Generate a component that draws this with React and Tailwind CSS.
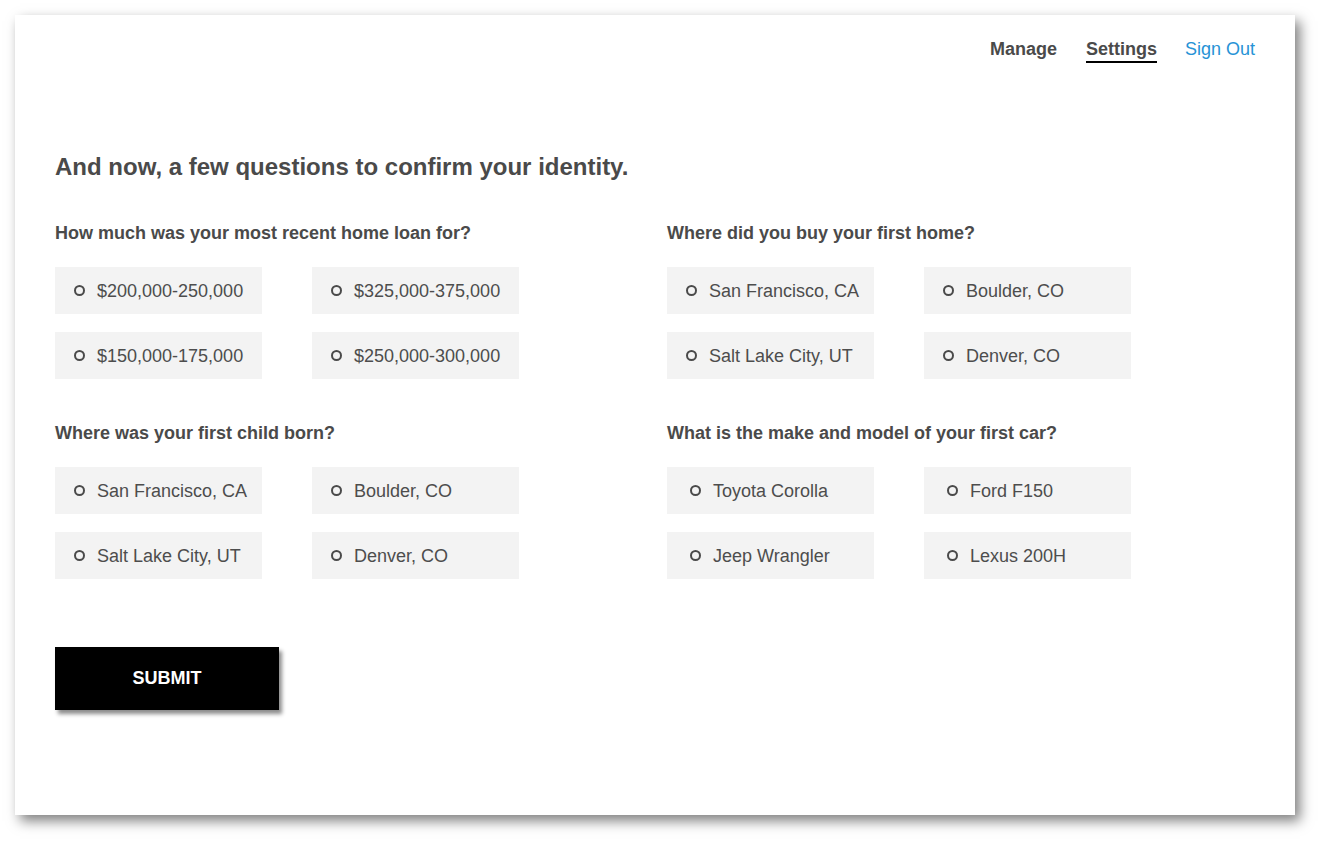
import React from 'react';

const groups = [
  {
    question: 'How much was your most recent home loan for?',
    inset: 'pl-[19px]',
    options: ['$200,000-250,000', '$325,000-375,000', '$150,000-175,000', '$250,000-300,000'],
  },
  {
    question: 'Where did you buy your first home?',
    inset: 'pl-[19px]',
    options: ['San Francisco, CA', 'Boulder, CO', 'Salt Lake City, UT', 'Denver, CO'],
  },
  {
    question: 'Where was your first child born?',
    inset: 'pl-[19px]',
    options: ['San Francisco, CA', 'Boulder, CO', 'Salt Lake City, UT', 'Denver, CO'],
  },
  {
    question: 'What is the make and model of your first car?',
    inset: 'pl-[23px]',
    options: ['Toyota Corolla', 'Ford F150', 'Jeep Wrangler', 'Lexus 200H'],
  },
];

const Option = ({ label, inset }) => (
  <label className={`flex items-center w-[207px] h-[47px] bg-[#f3f3f3] ${inset} cursor-pointer`}>
    <span className="w-[11px] h-[11px] rounded-full border-2 border-[#4a4a4a] mr-[12px] shrink-0" />
    <span className="text-[18px] leading-[20px] text-[#4d4d4d]">{label}</span>
  </label>
);

const QuestionGroup = ({ group }) => (
  <div>
    <h2 className="text-[18px] leading-[20px] font-bold text-[#4a4a4a] mb-[24px]">{group.question}</h2>
    <div className="grid grid-cols-[207px_207px] gap-x-[50px] gap-y-[18px]">
      {group.options.map((opt, i) => (
        <Option key={i} label={opt} inset={group.inset} />
      ))}
    </div>
  </div>
);

export default function App() {
  return (
    <div className="w-[1325px] h-[845px] bg-white pt-[15px] pl-[15px]" style={{ fontFamily: '"Liberation Sans", Arial, sans-serif' }}>
      <div className="w-[1280px] h-[800px] bg-white shadow-[5px_6px_12px_rgba(0,0,0,0.5)] pt-[23px] px-[40px]">
        {/* Nav */}
        <nav className="flex justify-end items-start h-[22px] text-[18px] leading-[22px]">
          <a className="font-bold text-[#4a4a4a] mr-[29px]">Manage</a>
          <a className="font-bold text-[#4a4a4a] border-b-2 border-black pb-[1px] mr-[28px]">Settings</a>
          <a className="text-[#2693d6]">Sign Out</a>
        </nav>

        <h1 className="mt-[93px] text-[24px] leading-[28px] font-bold text-[#4a4a4a]">
          And now, a few questions to confirm your identity.
        </h1>

        <div className="mt-[42px] grid grid-cols-[612px_1fr] gap-y-[44px]">
          {groups.map((g, i) => (
            <QuestionGroup key={i} group={g} />
          ))}
        </div>

        <button className="mt-[68px] w-[224px] h-[63px] bg-black text-white text-[18px] font-bold shadow-[3px_4px_4px_rgba(0,0,0,0.45)]">
          SUBMIT
        </button>
      </div>
    </div>
  );
}
